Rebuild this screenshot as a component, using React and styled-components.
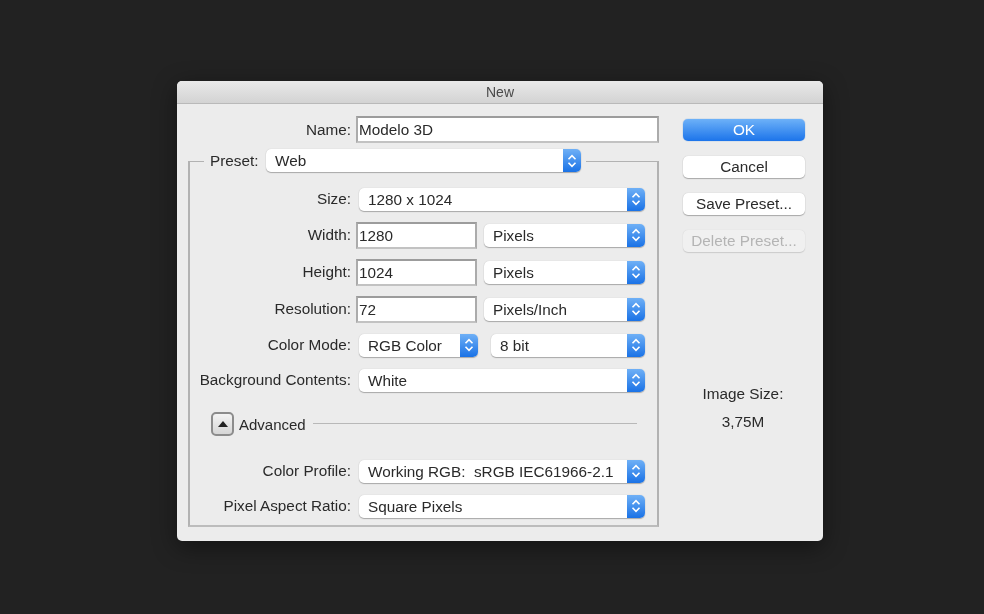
import React from 'react';
import styled, { createGlobalStyle } from 'styled-components';

const Global = createGlobalStyle`
  html, body { margin: 0; height: 100%; background: #222222; }
  body { font-family: "Liberation Sans", Arial, sans-serif; color: #2a2a2a; overflow: hidden; }
`;

const Page = styled.div`
  width: 984px;
  height: 614px;
  padding: 81px 0 0 177px;
  box-sizing: border-box;
  background: #222222;
`;

const Dialog = styled.div`
  width: 646px;
  height: 460px;
  background: #ececec;
  border-radius: 5px;
  overflow: hidden;
  filter: blur(0.45px);
  box-shadow: 0 6px 24px rgba(0, 0, 0, 0.45);
`;

const TitleBar = styled.div`
  height: 22px;
  background: linear-gradient(#e9e9e9, #d3d3d3);
  border-bottom: 1px solid #b9b9b9;
  text-align: center;
  font-size: 14px;
  line-height: 23px;
  color: #4a4a4a;
`;

const Body = styled.div`
  display: flex;
`;

const Main = styled.div`
  width: 506px;
  padding: 12px 0 0 11px;
  box-sizing: border-box;
`;

const Side = styled.div`
  width: 122px;
  padding-top: 15px;
  display: flex;
  flex-direction: column;
  align-items: stretch;
`;

const Row = styled.div`
  display: flex;
  align-items: center;
  height: ${p => p.$h || 36}px;
`;

const Label = styled.label`
  width: 161px;
  flex: none;
  text-align: right;
  font-size: 15.3px;
  white-space: nowrap;
`;

const NameLabel = styled(Label)`
  width: 163px;
`;

const TextInput = styled.div`
  width: ${p => p.$w}px;
  height: 27px;
  margin-left: 5px;
  box-sizing: border-box;
  flex: none;
  background: #fff;
  border: 2px solid #ababab;
  border-top-color: #9c9c9c;
  border-bottom-color: #c2c2c2;
  padding-left: 1px;
  font-size: 15.3px;
  line-height: 24px;
`;

const SelectBox = styled.div`
  width: ${p => p.$w}px;
  height: 23px;
  margin-left: ${p => p.$ml ?? 8}px;
  box-sizing: border-box;
  flex: none;
  display: flex;
  background: #fff;
  border-radius: 5px;
  overflow: hidden;
  box-shadow: 0 1px 1px #a8a8a8, 0 0 1px #bdbdbd;
  font-size: 15.3px;
  line-height: 23px;
`;

const SelectText = styled.div`
  flex: 1;
  padding-left: 9px;
  white-space: pre;
`;

const Stepper = styled.div`
  width: 18px;
  flex: none;
  display: flex;
  align-items: center;
  justify-content: center;
  background: linear-gradient(#6fb0f6, #1a72e6);
`;

const Arrows = () => (
  <svg width="10" height="16" viewBox="0 0 10 16" fill="none" stroke="#fff" strokeWidth="1.6">
    <path d="M1.5 6.2L5 2.6l3.5 3.6" />
    <path d="M1.5 9.8L5 13.4l3.5-3.6" />
  </svg>
);

const Select = ({ w, ml, children }) => (
  <SelectBox $w={w} $ml={ml}>
    <SelectText>{children}</SelectText>
    <Stepper><Arrows /></Stepper>
  </SelectBox>
);

const Group = styled.div`
  width: 471px;
  height: 366px;
  margin-top: 18px;
  box-sizing: border-box;
  border: 2px solid #b2b2b2;
  border-top-width: 1px;
  border-bottom-color: #bcbcbc;
`;

const Legend = styled.div`
  display: flex;
  align-items: center;
  height: 23px;
  margin: -13px 0 0 14px;
  width: 376px;
  padding-left: 6px;
  background: #ececec;
`;

const LegendLabel = styled.span`
  width: 47px;
  flex: none;
  font-size: 15.3px;
  white-space: nowrap;
`;

const Rows = styled.div`
  padding-top: 9px;
`;

const AdvancedRow = styled.div`
  display: flex;
  align-items: center;
  height: 28px;
  margin: 13px 20px 15px 21px;
`;

const Disclosure = styled.div`
  width: 23px;
  height: 24px;
  box-sizing: border-box;
  border: 2px solid #8c8c8c;
  border-radius: 5px;
  background: linear-gradient(#f4f4f4, #d6d6d6);
  display: flex;
  align-items: center;
  justify-content: center;
  flex: none;
`;

const Triangle = styled.div`
  width: 0;
  height: 0;
  border-left: 5px solid transparent;
  border-right: 5px solid transparent;
  border-bottom: 6px solid #222;
`;

const AdvancedLabel = styled.span`
  margin-left: 5px;
  font-size: 15px;
  white-space: nowrap;
`;

const Divider = styled.div`
  flex: 1;
  height: 1px;
  margin: -1px 0 0 7px;
  background: #b8b8b8;
`;

const Button = styled.div`
  height: 22px;
  margin-bottom: 15px;
  border-radius: 5px;
  text-align: center;
  font-size: 15.3px;
  line-height: 22px;
  white-space: nowrap;
  background: ${p => p.$primary ? 'linear-gradient(#6db1f8, #1c74ea)' : p.$disabled ? '#f0f0f0' : '#fff'};
  color: ${p => p.$primary ? '#fff' : p.$disabled ? '#b4b4b4' : '#2a2a2a'};
  box-shadow: ${p => p.$primary ? '0 0 1px #3b82d8' : p.$disabled ? '0 1px 1px #cbcbcb, 0 0 1px #cfcfcf' : '0 1px 1px #a8a8a8, 0 0 1px #b8b8b8'};
`;

const ImageInfo = styled.div`
  margin-top: 118px;
  padding-right: 2px;
  text-align: center;
  font-size: 15.3px;
`;

const ImageValue = styled.div`
  margin-top: 10px;
`;

export default function App() {
  return (
    <Page>
      <Global />
      <Dialog>
        <TitleBar>New</TitleBar>
        <Body>
          <Main>
            <Row $h={27}>
              <NameLabel>Name:</NameLabel>
              <TextInput $w={303}>Modelo 3D</TextInput>
            </Row>
            <Group>
              <Legend>
                <LegendLabel>Preset:</LegendLabel>
                <Select w={315} ml={9}>Web</Select>
              </Legend>
              <Rows>
                <Row $h={36}>
                  <Label>Size:</Label>
                  <Select w={286}>1280 x 1024</Select>
                </Row>
                <Row $h={36}>
                  <Label>Width:</Label>
                  <TextInput $w={121}>1280</TextInput>
                  <Select w={161} ml={7}>Pixels</Select>
                </Row>
                <Row $h={38}>
                  <Label>Height:</Label>
                  <TextInput $w={121}>1024</TextInput>
                  <Select w={161} ml={7}>Pixels</Select>
                </Row>
                <Row $h={36}>
                  <Label>Resolution:</Label>
                  <TextInput $w={121}>72</TextInput>
                  <Select w={161} ml={7}>Pixels/Inch</Select>
                </Row>
                <Row $h={36}>
                  <Label>Color Mode:</Label>
                  <Select w={119}>RGB Color</Select>
                  <Select w={154} ml={13}>8 bit</Select>
                </Row>
                <Row $h={34}>
                  <Label>Background Contents:</Label>
                  <Select w={286}>White</Select>
                </Row>
              </Rows>
              <AdvancedRow>
                <Disclosure><Triangle /></Disclosure>
                <AdvancedLabel>Advanced</AdvancedLabel>
                <Divider />
              </AdvancedRow>
              <Row $h={36}>
                <Label>Color Profile:</Label>
                <Select w={286}>Working RGB:  sRGB IEC61966-2.1</Select>
              </Row>
              <Row $h={34}>
                <Label>Pixel Aspect Ratio:</Label>
                <Select w={286}>Square Pixels</Select>
              </Row>
            </Group>
          </Main>
          <Side>
            <Button $primary>OK</Button>
            <Button>Cancel</Button>
            <Button>Save Preset...</Button>
            <Button $disabled>Delete Preset...</Button>
            <ImageInfo>
              Image Size:
              <ImageValue>3,75M</ImageValue>
            </ImageInfo>
          </Side>
        </Body>
      </Dialog>
    </Page>
  );
}
